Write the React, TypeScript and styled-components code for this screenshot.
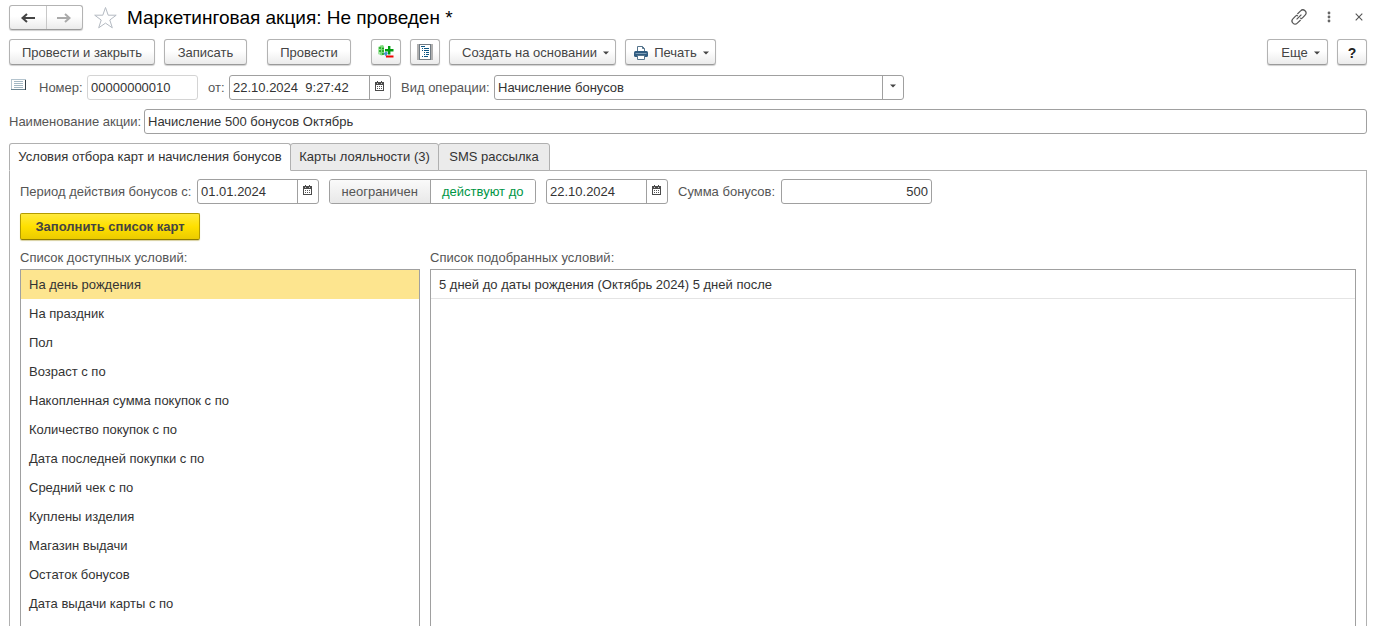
import React, { useState } from 'react';
import styled, { createGlobalStyle, css } from 'styled-components';

const GlobalStyle = createGlobalStyle`
  *, *::before, *::after { box-sizing: border-box; }
  body { margin: 0; background: #fff; }
  body, button, input, select {
    font-family: "Liberation Sans", Arial, sans-serif;
    font-size: 13px;
    line-height: 16px;
    color: #333;
  }
  svg { display: block; flex: none; }
`;

const Page = styled.div`
  display: flex;
  flex-direction: column;
  height: 100vh;
  overflow: hidden;
  padding: 5px 7px 0 9px;
`;

const TitleBar = styled.header`
  display: flex;
  align-items: center;
  height: 25px;
  margin-bottom: 9px;
`;

const raised = css`
  background: linear-gradient(#fff 0%, #fff 45%, #ebebeb 100%);
  border: 1px solid #b3b3b3;
  border-bottom-color: #9a9a9a;
  border-radius: 3px;
  box-shadow: 0 1px 1px #d0d0d0;
`;

const NavGroup = styled.nav`
  ${raised}
  display: flex;
  width: 74px;
  height: 25px;
`;

const NavButton = styled.button`
  flex: 1;
  display: flex;
  align-items: center;
  justify-content: center;
  padding: 0;
  border: 0;
  background: none;
  & + & { border-left: 1px solid #c8c8c8; }
`;

const PlainButton = styled.button`
  display: flex;
  align-items: center;
  justify-content: center;
  padding: 0;
  border: 0;
  background: none;
`;

const StarButton = styled(PlainButton)`
  width: 24px;
  height: 24px;
  margin: 0 10px;
`;

const Title = styled.h1`
  flex: 1;
  margin: 0;
  font-size: 19px;
  line-height: 24px;
  font-weight: 400;
  color: #000;
`;

const WindowTools = styled.div`
  display: flex;
  gap: 14px;
`;

const ToolButton = styled(PlainButton)`
  width: 16px;
  height: 24px;
  padding-bottom: 2px;
`;

const Toolbar = styled.div`
  display: flex;
  gap: 9px;
  margin-bottom: 10px;
`;

const ToolGroup = styled.div<{ $before?: number; $push?: boolean }>`
  display: flex;
  gap: 9px;
  margin-left: ${p => (p.$push ? 'auto' : `${p.$before ?? 0}px`)};
`;

const Button = styled.button<{ $width: number; $indent?: number }>`
  ${raised}
  display: flex;
  align-items: center;
  justify-content: center;
  gap: 6px;
  width: ${p => p.$width}px;
  height: 26px;
  padding: 2px 0 0 ${p => p.$indent ?? 0}px;
  color: #444;
  white-space: nowrap;
`;

const IconButton = styled(Button)`
  padding: 0;
`;

const HelpButton = styled(Button)`
  font-size: 14px;
  font-weight: 700;
  color: #222;
`;

const FillButton = styled.button`
  width: 180px;
  height: 27px;
  padding: 0;
  border: 1px solid #b39b00;
  border-bottom-color: #8f7c00;
  border-radius: 2px;
  background: linear-gradient(#ffe93d, #ffe000 50%, #ebcb00);
  box-shadow: 0 1px 1px #d8d0a0;
  font-weight: 700;
  color: #444;
`;

const FormRow = styled.div`
  display: flex;
  align-items: center;
  height: 25px;
  margin-bottom: 9px;
`;

const Label = styled.label<{ $width: number }>`
  flex: none;
  width: ${p => p.$width}px;
  color: #555;
  white-space: nowrap;
`;

const StateIcon = styled.div`
  width: 30px;
  height: 18px;
  padding-left: 2px;
`;

const Field = styled.div<{ $width?: number; $muted?: boolean; $gap?: number }>`
  display: flex;
  flex: ${p => (p.$width ? 'none' : '1')};
  width: ${p => (p.$width ? `${p.$width}px` : 'auto')};
  height: 25px;
  margin-right: ${p => p.$gap ?? 0}px;
  border: 1px solid ${p => (p.$muted ? '#d4d4d4' : '#a0a0a0')};
  border-radius: 3px;
  background: #fff;
  overflow: hidden;
`;

const Input = styled.input<{ $right?: boolean }>`
  flex: 1;
  min-width: 0;
  height: 23px;
  padding: 0 3px;
  border: 0;
  outline: 0;
  background: none;
  white-space: pre;
  text-align: ${p => (p.$right ? 'right' : 'left')};
`;

const FieldButton = styled(PlainButton)`
  width: 21px;
  padding-bottom: 3px;
  border-left: 1px solid #a0a0a0;
`;

const SelectWrap = styled(Field)`
  display: grid;
  grid-template-columns: 1fr 21px;
`;

const Select = styled.select`
  grid-column: 1 / 3;
  grid-row: 1;
  height: 23px;
  padding: 0 3px;
  border: 0;
  outline: 0;
  background: none;
  appearance: none;
`;

const SelectArrow = styled.span`
  grid-column: 2;
  grid-row: 1;
  display: flex;
  align-items: center;
  justify-content: center;
  padding-bottom: 3px;
  border-left: 1px solid #a0a0a0;
  pointer-events: none;
`;

const Tabs = styled.div`
  display: flex;
  margin-bottom: -1px;
`;

const Tab = styled.button<{ $active: boolean; $width: number }>`
  width: ${p => p.$width}px;
  height: 28px;
  padding: 0;
  border: 1px solid #b0b0b0;
  border-bottom-color: ${p => (p.$active ? '#fff' : '#b0b0b0')};
  border-radius: 3px 3px 0 0;
  background: ${p => (p.$active ? '#fff' : '#ebebeb')};
  white-space: nowrap;
  z-index: ${p => (p.$active ? 1 : 0)};
  & + & { margin-left: -1px; }
`;

const Panel = styled.section`
  flex: 1;
  display: flex;
  flex-direction: column;
  min-height: 0;
  padding: 8px 10px 0;
  border: 1px solid #b0b0b0;
  border-bottom: 0;
`;

const Segmented = styled.div`
  display: flex;
  width: 207px;
  height: 25px;
  margin-right: 10px;
  border: 1px solid #a0a0a0;
  border-radius: 3px;
  overflow: hidden;
`;

const Segment = styled.label<{ $active: boolean }>`
  display: flex;
  align-items: center;
  justify-content: center;
  flex: ${p => (p.$active ? '105' : '100')};
  color: ${p => (p.$active ? '#009646' : '#555')};
  background: ${p => (p.$active ? '#fff' : 'linear-gradient(#fafafa, #e8e8e8)')};
  & + & { border-left: 1px solid #a0a0a0; }
`;

const HiddenRadio = styled.input`
  appearance: none;
  width: 0;
  height: 0;
  margin: 0;
`;

const Lists = styled.div`
  flex: 1;
  display: flex;
  gap: 10px;
  min-height: 0;
  margin-top: 10px;
`;

const ListColumn = styled.div<{ $width?: number }>`
  display: flex;
  flex-direction: column;
  flex: ${p => (p.$width ? 'none' : '1')};
  width: ${p => (p.$width ? `${p.$width}px` : 'auto')};
`;

const ListTitle = styled.h2`
  margin: 0 0 3px;
  font-size: 13px;
  line-height: 16px;
  font-weight: 400;
  color: #555;
`;

const List = styled.ul`
  flex: 1;
  margin: 0;
  padding: 0;
  border: 1px solid #a0a0a0;
  border-bottom: 0;
  list-style: none;
`;

const Item = styled.li<{ $selected?: boolean; $lined?: boolean }>`
  height: 29px;
  padding: 0 8px;
  line-height: 29px;
  background: ${p => (p.$selected ? '#fde58f' : 'none')};
  box-shadow: ${p => (p.$lined ? 'inset 0 -1px #e4e4e4' : 'none')};
`;

const Arrow = ({ color, flip }: { color: string; flip?: boolean }) => (
  <svg width="16" height="12" viewBox="0 0 16 12">
    <path
      d={flip ? 'M1 6H13M9 2L13.5 6L9 10' : 'M15 6H3M7 2L2.5 6L7 10'}
      fill="none" stroke={color} strokeWidth="2"
    />
  </svg>
);

const Star = () => (
  <svg width="24" height="24" viewBox="0 0 24 24">
    <path
      d="M12.5 1.5L15.2 9.2H23.2L16.8 14L19.3 21.8L12.5 17.1L5.7 21.8L8.2 14L1.7 9.2H9.8Z"
      fill="#fff" stroke="#b4bac2" strokeWidth="1"
    />
  </svg>
);

const LinkIcon = () => (
  <svg width="16" height="16" viewBox="0 0 16 16" fill="none" stroke="#555" strokeWidth="1.2">
    <path d="M5.6 10.4L10.4 5.6" />
    <path d="M6.4 5L9.6 1.9a3 3 0 0 1 4.5 4.3L11 9.4" />
    <path d="M9.2 8.9Q10 9.8 11 9.4M6.8 7.1Q6 6.2 5 6.6" />
    <path d="M5 6.6L1.9 9.8a3 3 0 0 0 4.4 4.3L9.6 11" />
  </svg>
);

const Dots = () => (
  <svg width="4" height="12" viewBox="0 0 4 12" fill="#666">
    <circle cx="2" cy="2" r="1.4" /><circle cx="2" cy="6" r="1.4" /><circle cx="2" cy="10" r="1.4" />
  </svg>
);

const Close = () => (
  <svg width="8" height="8" viewBox="0 0 8 8">
    <path d="M.7.7L7.3 7.3M7.3.7L.7 7.3" stroke="#555" strokeWidth="1.1" />
  </svg>
);

const Caret = () => (
  <svg width="6" height="4" viewBox="0 0 6 4"><path d="M0 .5H6L3 3.5Z" fill="#444" /></svg>
);

const Calendar = () => (
  <svg width="10" height="10" viewBox="0 0 10 10" shapeRendering="crispEdges">
    <path d="M0 1h9v9h-9z" fill="#4a4a4a" />
    <path d="M1 4h7v5h-7z" fill="#fff" />
    <path d="M2 0h1v1h-1zM6 0h1v1h-1z" fill="#4a4a4a" />
    <path d="M2 2h1v1h-1zM6 2h1v1h-1z" fill="#ccc" />
    <path d="M2 5h1v1h-1zM4 5h1v1h-1zM6 5h1v1h-1zM2 7h1v1h-1zM4 7h1v1h-1zM6 7h1v1h-1z" fill="#555" />
  </svg>
);

const Movements = () => (
  <svg width="16" height="16" viewBox="0 0 16 16">
    <path d="M0 3L2 2V11L0 10Z" fill="#a6e8a6" />
    <path d="M2 1.5L5 1L6 2.5V10L4 11.5L2 11Z" fill="#7ddc7d" />
    <path d="M1 4H3M1 7H3M4 4.5H6M4 7H6M4 10H6" stroke="#16a016" strokeWidth="1.4" />
    <path d="M10 2H12.400V5H15.500V7.400H12.400V10.500H10V7.400H7V5H10Z" fill="#009c10" />
    <path d="M5.500 9.500L8 7.500L10 9L8 12.500Z" fill="#4a94cc" />
    <path d="M8 11.500H15.500V13.500H8Z" fill="#f00000" />
  </svg>
);

const Journal = () => (
  <svg width="16" height="16" viewBox="0 0 16 16" shapeRendering="crispEdges">
    <path d="M0 0h16v16h-16z" fill="#b0b0b0" />
    <path d="M2 0h12v16h-12z" fill="#707a82" />
    <path d="M3 1h10v14h-10z" fill="#fff" />
    <path
      d="M4 2h4v1h-4zM5 4h1v1h-1zM7 4h5v1h-5zM5 6h1v1h-1zM7 6h5v1h-5zM7 8h1v1h-1zM9 8h3v1h-3zM7 10h1v1h-1zM9 10h3v1h-3zM5 12h1v1h-1zM7 12h4v1h-4z"
      fill="#0d5684"
    />
  </svg>
);

const Printer = () => (
  <svg width="14" height="14" viewBox="0 0 14 14">
    <path d="M3.500 5.500V.5H8.500L10.500 2.500V5.500Z" fill="#fff" stroke="#55748c" />
    <path d="M8.500 .5V2.500H10.500" fill="none" stroke="#55748c" />
    <rect x="0" y="5" width="14" height="6" rx="1.500" fill="#2f5b80" />
    <path d="M1.500 7.500H12.500" stroke="#7f9fb8" />
    <path d="M3.500 9.500H10.500V13.500H3.500Z" fill="#fff" stroke="#55748c" />
  </svg>
);

const Document = () => (
  <svg width="15" height="12" viewBox="0 0 15 12" shapeRendering="crispEdges">
    <path d="M0 0h15v11h-15z" fill="#b4c4ce" />
    <path d="M1 1h13v9h-13z" fill="#fff" />
    <path d="M3 2h9v1h-9zM3 4h9v1h-9zM3 6h9v1h-9zM3 8h9v1h-9z" fill="#a3b8c4" />
    <path d="M0 10h15v1h-15z" fill="#6b8592" />
    <path d="M14 1h1v10h-1z" fill="#333f46" />
  </svg>
);

const conditions = [
  'На день рождения', 'На праздник', 'Пол', 'Возраст с по', 'Накопленная сумма покупок с по',
  'Количество покупок с по', 'Дата последней покупки с по', 'Средний чек с по',
  'Куплены изделия', 'Магазин выдачи', 'Остаток бонусов', 'Дата выдачи карты с по',
];

const tabs = [
  { title: 'Условия отбора карт и начисления бонусов', width: 282 },
  { title: 'Карты лояльности (3)', width: 149 },
  { title: 'SMS рассылка', width: 112 },
];

type DateFieldProps = { id: string; value: string; width: number };

const DateField = ({ id, value, width }: DateFieldProps) => (
  <Field $width={width} $gap={10}>
    <Input id={id} defaultValue={value} />
    <FieldButton type="button" aria-label="Выбрать дату"><Calendar /></FieldButton>
  </Field>
);

export default function App() {
  const [tab, setTab] = useState(0);
  const [limited, setLimited] = useState(true);
  const [selected, setSelected] = useState(0);

  return (
    <Page>
      <GlobalStyle />
      <TitleBar>
        <NavGroup>
          <NavButton type="button" aria-label="Назад"><Arrow color="#444" /></NavButton>
          <NavButton type="button" aria-label="Вперед"><Arrow color="#aaa" flip /></NavButton>
        </NavGroup>
        <StarButton type="button" aria-label="В избранное"><Star /></StarButton>
        <Title>Маркетинговая акция: Не проведен *</Title>
        <WindowTools>
          <ToolButton type="button" aria-label="Ссылка"><LinkIcon /></ToolButton>
          <ToolButton type="button" aria-label="Меню"><Dots /></ToolButton>
          <ToolButton type="button" aria-label="Закрыть"><Close /></ToolButton>
        </WindowTools>
      </TitleBar>

      <Toolbar>
        <ToolGroup>
          <Button type="button" $width={146}>Провести и закрыть</Button>
          <Button type="button" $width={83}>Записать</Button>
        </ToolGroup>
        <ToolGroup $before={11}>
          <Button type="button" $width={84}>Провести</Button>
        </ToolGroup>
        <ToolGroup $before={11}>
          <IconButton type="button" $width={30} aria-label="Движения документа"><Movements /></IconButton>
          <IconButton type="button" $width={30} aria-label="Журнал"><Journal /></IconButton>
          <Button type="button" $width={167} $indent={6}>Создать на основании <Caret /></Button>
          <Button type="button" $width={91} $indent={2}><Printer />Печать <Caret /></Button>
        </ToolGroup>
        <ToolGroup $push>
          <Button type="button" $width={61} $indent={6}>Еще <Caret /></Button>
          <HelpButton type="button" $width={30}>?</HelpButton>
        </ToolGroup>
      </Toolbar>

      <FormRow>
        <StateIcon><Document /></StateIcon>
        <Label htmlFor="number" $width={48}>Номер:</Label>
        <Field $width={111} $muted $gap={10}><Input id="number" defaultValue="00000000010" /></Field>
        <Label htmlFor="date" $width={21}>от:</Label>
        <DateField id="date" value="22.10.2024  9:27:42" width={162} />
        <Label htmlFor="operation" $width={93}>Вид операции:</Label>
        <SelectWrap $width={410}>
          <Select id="operation"><option>Начисление бонусов</option></Select>
          <SelectArrow><Caret /></SelectArrow>
        </SelectWrap>
      </FormRow>
      <FormRow>
        <Label htmlFor="name" $width={135}>Наименование акции:</Label>
        <Field><Input id="name" defaultValue="Начисление 500 бонусов Октябрь" /></Field>
      </FormRow>

      <Tabs role="tablist">
        {tabs.map((t, i) => (
          <Tab key={t.title} type="button" role="tab" aria-selected={i === tab}
            $active={i === tab} $width={t.width} onClick={() => setTab(i)}>{t.title}</Tab>
        ))}
      </Tabs>
      <Panel role="tabpanel">
        <FormRow>
          <Label htmlFor="from" $width={177}>Период действия бонусов с:</Label>
          <DateField id="from" value="01.01.2024" width={122} />
          <Segmented role="radiogroup" aria-label="Срок действия">
            <Segment $active={!limited}>
              <HiddenRadio type="radio" name="term" checked={!limited} onChange={() => setLimited(false)} />
              неограничен
            </Segment>
            <Segment $active={limited}>
              <HiddenRadio type="radio" name="term" checked={limited} onChange={() => setLimited(true)} />
              действуют до
            </Segment>
          </Segmented>
          <DateField id="until" value="22.10.2024" width={122} />
          <Label htmlFor="sum" $width={103}>Сумма бонусов:</Label>
          <Field $width={151}><Input id="sum" $right defaultValue="500" /></Field>
        </FormRow>
        <div><FillButton type="button">Заполнить список карт</FillButton></div>
        <Lists>
          <ListColumn $width={400}>
            <ListTitle>Список доступных условий:</ListTitle>
            <List>
              {conditions.map((c, i) => (
                <Item key={c} $selected={i === selected} onClick={() => setSelected(i)}>{c}</Item>
              ))}
            </List>
          </ListColumn>
          <ListColumn>
            <ListTitle>Список подобранных условий:</ListTitle>
            <List>
              <Item $lined>5 дней до даты рождения (Октябрь 2024) 5 дней после</Item>
            </List>
          </ListColumn>
        </Lists>
      </Panel>
    </Page>
  );
}
